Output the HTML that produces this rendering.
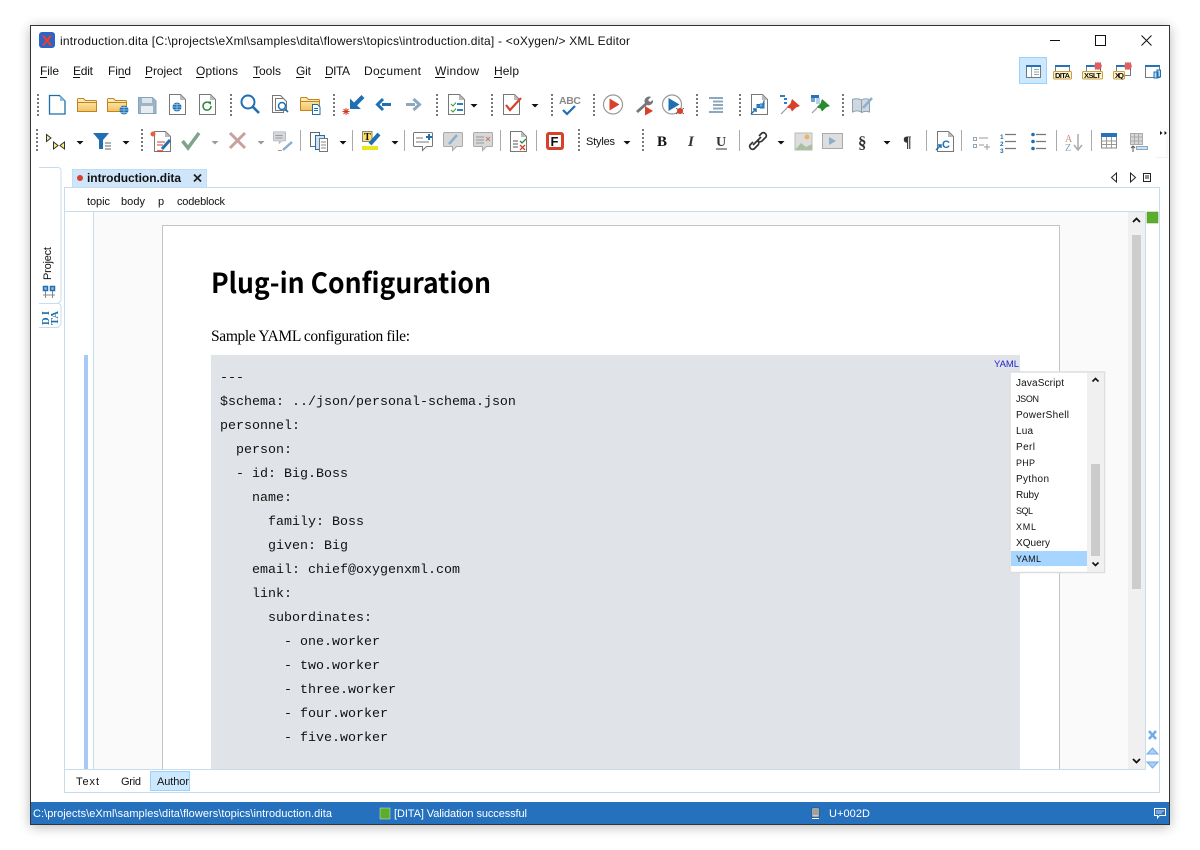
<!DOCTYPE html>
<html><head><meta charset="utf-8"><title>introduction.dita</title>
<style>
html,body{margin:0;padding:0;background:#fff;width:1200px;height:850px;overflow:hidden}
svg{position:absolute;left:0;top:0;display:block}
text{font-family:"Liberation Sans",sans-serif;font-size:12px;fill:#111}
.s{font-size:11px}
.m{font-family:"Liberation Mono",monospace;font-size:13.33px;fill:#111;white-space:pre}
.p{font-size:10px;fill:#111}
.u{font-size:9px;fill:#111}
.w{fill:#fff;font-size:11px}
</style></head><body>
<svg width="1200" height="850" viewBox="0 0 1200 850" xmlns="http://www.w3.org/2000/svg">
<defs>
<filter id="sh" x="-5%" y="-5%" width="110%" height="110%"><feGaussianBlur stdDeviation="6"/></filter>
<g id="grip"><rect x="0" y="0" width="2" height="2"/><rect x="0" y="4" width="2" height="2"/><rect x="0" y="8" width="2" height="2"/><rect x="0" y="12" width="2" height="2"/><rect x="0" y="16" width="2" height="2"/><rect x="0" y="20" width="2" height="2"/></g>
<path id="dd" d="M-3.500 0h7l-3.500 3.500z"/>
<linearGradient id="fold" x1="0" y1="0" x2="0" y2="1"><stop offset="0" stop-color="#fff0c0"/><stop offset="1" stop-color="#f3c260"/></linearGradient>
<g id="folder"><path d="M.500 2.500a1 1 0 0 1 1-1h5l2 2h10a1 1 0 0 1 1 1v10h-19z" fill="url(#fold)" stroke="#c08420"/><path d="M1 5.500h18" stroke="#c08420"/></g>
<g id="page"><path d="M.500.500h11l5 5v15h-16z" fill="#fff" stroke="#777"/><path d="M11 .500v5.500h5.500z" fill="#bbb"/></g>
<g id="globe"><circle cx="0" cy="0" r="4.500" fill="#1f6fb2"/><path d="M-4.500 0h9M0-4.500v9M-3.500-2.500h7M-3.500 2.500h7" stroke="#a8cce8" stroke-width=".7"/></g>
<g id="bubble"><path d="M.500 1.500a1 1 0 0 1 1-1h17a1 1 0 0 1 1 1v12a1 1 0 0 1-1 1h-5l-4 4v-4h-8a1 1 0 0 1-1-1z"/></g>
</defs>

<!-- window -->
<rect x="30" y="27" width="1140" height="800" fill="#000" opacity=".28" filter="url(#sh)"/>
<rect x="30.500" y="25.500" width="1139" height="799" fill="#fff" stroke="#333"/>

<!-- title bar -->
<rect x="39" y="32" width="16" height="16" rx="3" fill="#2a64c8"/>
<path d="M43 35.500l8 10M51 35.500l-8 10" stroke="#f03c20" stroke-width="2.200"/>
<text x="60" y="45" textLength="570">introduction.dita [C:\projects\eXml\samples\dita\flowers\topics\introduction.dita] - &lt;oXygen/&gt; XML Editor</text>
<path d="M1050 40.500h10M1095.500 35.500h10v10h-10zM1141.500 35.500l10 10M1151.500 35.500l-10 10" fill="none" stroke="#111"/>

<!-- menu -->
<g>
<text x="40" y="75" textLength="19">File</text><path d="M40 77.500h7" stroke="#111"/>
<text x="73" y="75" textLength="20">Edit</text><path d="M73 77.500h7" stroke="#111"/>
<text x="108" y="75" textLength="23">Find</text><path d="M119 77.500h6" stroke="#111"/>
<text x="145" y="75" textLength="37">Project</text><path d="M145 77.500h7" stroke="#111"/>
<text x="196" y="75" textLength="42">Options</text><path d="M196 77.500h8" stroke="#111"/>
<text x="253" y="75" textLength="28">Tools</text><path d="M253 77.500h7" stroke="#111"/>
<text x="296" y="75" textLength="15">Git</text><path d="M296 77.500h8" stroke="#111"/>
<text x="325" y="75" textLength="25">DITA</text><path d="M325 77.500h7" stroke="#111"/>
<text x="364" y="75" textLength="57">Document</text><path d="M378 77.500h6" stroke="#111"/>
<text x="435" y="75" textLength="44">Window</text><path d="M435 77.500h10" stroke="#111"/>
<text x="494" y="75" textLength="25">Help</text><path d="M494 77.500h8" stroke="#111"/>
</g>

<!-- perspective buttons -->
<rect x="1019.500" y="57.500" width="27" height="26" fill="#cce8ff" stroke="#99d1ff"/>
<g fill="#fff" stroke="#777">
<rect x="1026.500" y="65.500" width="14" height="12"/>
<path d="M1031.500 66v11M1034 69.500h5M1034 72h5M1034 74.500h5" stroke="#8ab"/>
<rect x="1026" y="65" width="15" height="2" fill="#2a72b8" stroke="none"/>
<rect x="1055.500" y="65.500" width="14" height="10"/><rect x="1055" y="65" width="15" height="2" fill="#2a72b8" stroke="none"/>
<rect x="1086.500" y="65.500" width="14" height="10"/><rect x="1086" y="65" width="15" height="2" fill="#2a72b8" stroke="none"/>
<rect x="1116.500" y="65.500" width="14" height="10"/><rect x="1116" y="65" width="15" height="2" fill="#2a72b8" stroke="none"/>
<rect x="1145.500" y="65.500" width="14" height="12"/><rect x="1145" y="65" width="15" height="2" fill="#2a72b8" stroke="none"/>
</g>
<g fill="#fff3c8" stroke="#c8a040"><rect x="1053.500" y="71.500" width="18" height="7.500" rx="1"/><rect x="1082.500" y="71.500" width="20" height="7.500" rx="1"/><rect x="1113.500" y="71.500" width="11" height="7.500" rx="1"/></g>
<text x="1055" y="78" style="font-size:7.500px;font-weight:bold" textLength="15">DITA</text><text x="1084" y="78" style="font-size:7.500px;font-weight:bold" textLength="17">XSLT</text><text x="1115" y="78" style="font-size:7.500px;font-weight:bold" textLength="9">XQ</text>
<path d="M1095 62.500l6 7M1101 62.500l-6 7M1125 62.500l6 7M1131 62.500l-6 7" stroke="#333" stroke-width=".6"/>
<circle cx="1098" cy="66" r="3.800" fill="#e06060"/><circle cx="1128" cy="66" r="3.800" fill="#e06060"/>
<path d="M1154 72h4v6h-4zM1157 70h3.500v7h-3.500z" fill="#bcdcf4" stroke="#1f6fb2"/>

<!-- grips -->
<g fill="#777">
<use href="#grip" x="37" y="94"/><use href="#grip" x="230" y="94"/><use href="#grip" x="333" y="94"/><use href="#grip" x="436" y="94"/><use href="#grip" x="491" y="94"/><use href="#grip" x="551" y="94"/><use href="#grip" x="593" y="94"/><use href="#grip" x="696" y="94"/><use href="#grip" x="739" y="94"/><use href="#grip" x="842" y="94"/>
<use href="#grip" x="36" y="129"/><use href="#grip" x="141" y="129"/><use href="#grip" x="578" y="129"/><use href="#grip" x="642" y="129"/>
</g>
<!-- separators row 2 -->
<path d="M300.500 130v21M352.500 130v21M404.500 130v21M500.500 130v21M536.500 130v21M739.500 130v21M926.500 130v21M961.500 130v21M1056.500 130v21M1091.500 130v21" stroke="#aaa"/>
<!-- dropdowns -->
<g fill="#111"><use href="#dd" x="474" y="104"/><use href="#dd" x="535" y="104"/><use href="#dd" x="80" y="141"/><use href="#dd" x="126" y="141"/><use href="#dd" x="343" y="141"/><use href="#dd" x="395" y="141"/><use href="#dd" x="627" y="141"/><use href="#dd" x="781" y="141"/><use href="#dd" x="887" y="141"/></g>
<g fill="#999"><use href="#dd" x="215" y="141"/><use href="#dd" x="261" y="141"/></g>

<!-- row 1 icons -->
<path d="M49.500 95.500h10l5.500 5.500v13h-15.500z" fill="#fff" stroke="#1c6ea8" stroke-width="1.300"/><path d="M60 96v5h5z" fill="#8cc0e8"/>
<use href="#folder" x="77" y="97"/>
<use href="#folder" x="107" y="97"/><use href="#globe" x="124" y="110"/>
<path d="M138.500 97.500h14l3.500 3.500v12.500h-17.500z" fill="#9cb4c8" stroke="#8aa2b6"/><rect x="142" y="98" width="10" height="5" fill="#dbe5ee"/><rect x="141" y="106" width="12" height="7" fill="#e6edf3"/>
<use href="#page" x="169" y="94"/><use href="#globe" x="177" y="107"/>
<use href="#page" x="199" y="94"/><path d="M211 106a4 4 0 1 1-1.500-3" fill="none" stroke="#2a8a3c" stroke-width="1.500"/><path d="M207 101.500h4v3.500z" fill="#2a8a3c"/>
<circle cx="248" cy="102" r="6.500" fill="none" stroke="#1f6fb2" stroke-width="2"/><path d="M253 107l6 6" stroke="#1f6fb2" stroke-width="2.600"/>
<path d="M272.500 95.500h8l3 3v14h-11z" fill="#fff" stroke="#777"/><path d="M275.500 98.500h8l3 3v9h-11z" fill="#fff" stroke="#777"/><circle cx="282" cy="106" r="3.500" fill="#fff" stroke="#1f6fb2" stroke-width="1.500"/><path d="M284.500 108.500l3.500 3.500" stroke="#1f6fb2" stroke-width="1.600"/>
<use href="#folder" x="300" y="96"/><path d="M312.500 104.500h5l2.500 2.500v7.500h-7.500z" fill="#fff" stroke="#1c6ea8"/><path d="M314 108.500h4M314 110.500h4" stroke="#1c6ea8"/>
<path d="M350 109V98.500l4 4 7.500-7.500 3 3-7.500 7.500 4 3.500z" fill="#1f6fb2"/>
<path d="M342.500 111.500h7M346 108v7M343.500 109l5 5M348.500 109l-5 5" stroke="#d83a20"/>
<path d="M391 104.500h-9M383 99l-5.500 5.500 5.500 5.500" fill="none" stroke="#1f6fb2" stroke-width="3"/>
<path d="M406 104.500h9M413.500 99l6 5.500-6 5.500" fill="none" stroke="#8ca8bf" stroke-width="3"/>
<use href="#page" x="448" y="94"/><path d="M451 104l2 2 3-3.500M451 110l2 2 3-3.500" fill="none" stroke="#3a9a3c"/><path d="M457 104h6M457 110h6" stroke="#2a80c8" stroke-width="2"/>
<use href="#page" x="503" y="94"/><path d="M506 105l4 5 11-12" fill="none" stroke="#d8402a" stroke-width="2.200"/>
<text x="559" y="104" style="font-size:10.500px;font-weight:bold;fill:#888" textLength="22">ABC</text><path d="M563 110l4 4 8-8" fill="none" stroke="#1f6fb2" stroke-width="2.200"/>
<circle cx="613" cy="104.500" r="9.500" fill="#fff" stroke="#999" stroke-width="1.200"/><path d="M609.500 98.500l10 6-10 6z" fill="#d8402a"/>
<path d="M651 97a4.500 4.500 0 0 0-6 6l-9 8 2 2 9-8a4.500 4.500 0 0 0 6-5l-3 2-2-2z" fill="#777"/><path d="M645 106l8 5-8 4.500z" fill="#d8402a"/>
<circle cx="672" cy="104.500" r="9.500" fill="#fff" stroke="#999" stroke-width="1.200"/><path d="M668.500 98l11 6.500-11 6.500z" fill="#1f6fb2"/><path d="M676 108l8 6M684 108l-8 6" stroke="#333" stroke-width=".7"/><circle cx="680" cy="111" r="3" fill="#d8402a"/>
<path d="M709 99h14M713 102.500h10M713 106h10M713 109.500h10M709 113h14" stroke="#8ca8bf" stroke-width="2" transform="translate(0 -1)"/>
<use href="#page" x="751" y="94"/><path d="M757 104.500h3v3h-3zM764 100v8h-4M764 104h-4" fill="#3a88c8" stroke="#1f6fb2"/><path d="M751 114l5-5M753 109h3v3" fill="none" stroke="#1f6fb2" stroke-width="1.500"/>
<path d="M780 95h5v2h-5zM784 98h3v2h-3zM784 102h3v2h-3z" fill="#2a80c8"/><path d="M792 99l8 7-4 1.500-4 4-1.500-3-4-1 4-4z" fill="#d8402a"/><path d="M787 108l-6 6" stroke="#999" stroke-width="1.200"/>
<rect x="811" y="95" width="8" height="3" fill="#2a72b8"/><rect x="811" y="98" width="4" height="4" fill="#6ba3d6"/><path d="M816 99h4M816 101h4M816 103h4" stroke="#6ba3d6"/><path d="M822 99l8 7-4 1.500-4 4-1.500-3-4-1 4-4z" fill="#2a8a2c"/><path d="M817 108l-5 5" stroke="#999" stroke-width="1.200"/>
<path d="M852.500 99.500c3-1 6-1 9 .5v12c-3-1.500-6-1.500-9 0zM861.500 100c2-1.500 5-1.500 8-.5v12.500c-3-1-6-.5-8 .5z" fill="#cfd8e0" stroke="#8ca0b0"/><path d="M863 108l9-10" stroke="#8cb0d0" stroke-width="2.500"/>

<!-- row 2 icons -->
<path d="M46.500 134.500v7l4.500-3.500zM53.500 142v7l4.500-3.500zM64.500 142v7l-4.500-3.500z" fill="#ffef80" stroke="#333"/>
<path d="M93 133h16l-6 7v9h-4v-9z" fill="#1f6fb2"/><path d="M105 143h6M105 146h6M105 149h6" stroke="#666"/>
<use href="#page" x="154" y="131"/><path d="M157 142h8M157 145h6" stroke="#d8402a"/><path d="M157 151h6" stroke="#d8402a" stroke-width="1.500"/><path d="M162 149l8-9" stroke="#1f6fb2" stroke-width="3"/><circle cx="153" cy="134" r="2.500" fill="#e8603a"/>
<path d="M182.500 141l5.500 7 11-15" fill="none" stroke="#7da58a" stroke-width="3.500"/>
<path d="M230 133l15 15M245 133l-15 15" stroke="#c8a09c" stroke-width="3"/>
<g transform="translate(273 131.500) scale(.65)" fill="#d4d8da" stroke="#aab"><use href="#bubble"/></g><path d="M275.500 135.500h7M275.500 138h7" stroke="#999"/><path d="M283 150l9-8" stroke="#8caecb" stroke-width="2.500"/><path d="M278 150.500h4" stroke="#999"/>
<path d="M310.500 132.500h9v14h-9z" fill="#fff" stroke="#666"/><path d="M315.500 135.500h9v14h-9z" fill="#cfe3f5" stroke="#1f6fb2"/><path d="M319.500 138.500h8l0 13h-8z" fill="#fff" stroke="#777"/><path d="M321 142h5M321 145h5M321 148h5" stroke="#888"/>
<rect x="362.500" y="131.500" width="9.500" height="10" fill="#ffe060" stroke="#888"/><text x="364" y="140" style="font-family:'Liberation Serif';font-size:10px;font-weight:bold" textLength="6">T</text><path d="M370 144l9-10" stroke="#1f6fb2" stroke-width="4"/><rect x="362" y="146" width="16" height="4" fill="#e8e820"/>
<g fill="#fff" stroke="#777"><use href="#bubble" transform="translate(413 132)"/></g><path d="M426 137h6M429 134v6" stroke="#1f6fb2" stroke-width="2"/><path d="M416 138h7M416 142h13" stroke="#777"/>
<g fill="#d8d8d8" stroke="#aaa"><use href="#bubble" transform="translate(443 132)"/><use href="#bubble" transform="translate(473 132)"/></g><path d="M449 144l8-9" stroke="#8caecb" stroke-width="2.500"/><path d="M476 137h8M476 140h8M476 143h8" stroke="#999"/><path d="M486 137l4 4M490 137l-4 4" stroke="#c87a6a"/>
<use href="#page" x="510" y="131"/><path d="M513 141h5M513 144h5M513 147h5" stroke="#555"/><path d="M520 141l2 2 4-4" fill="none" stroke="#2a8a3c" stroke-width="1.300"/><path d="M520 145l5 5M525 145l-5 5" stroke="#d8402a" stroke-width="1.300"/>
<rect x="546" y="132" width="18" height="18" rx="3" fill="#d8402a"/><path d="M549 135h12v12h-12z" fill="#fff"/><text x="550.500" y="146" style="font-weight:bold;font-size:13px;fill:#111">F</text>
<text x="586" y="145" class="s" textLength="29">Styles</text>
<text x="657" y="146" style="font-family:'Liberation Serif';font-weight:bold;font-size:15px" textLength="11">B</text>
<text x="688" y="146" style="font-family:'Liberation Serif';font-style:italic;font-weight:bold;font-size:15px;fill:#333" textLength="8">I</text>
<text x="716" y="146" style="font-family:'Liberation Serif';font-weight:bold;font-size:14px;fill:#333" textLength="11">U</text><path d="M716 149h11" stroke="#333"/>
<path d="M755 144l-3 3a3 3 0 0 0 4 4l4-4a3 3 0 0 0 0-4M761 138l3-3a3 3 0 0 1 4 4l-4 4a3 3 0 0 1-4 0M755 147l8-8" transform="translate(-2 -2)" fill="none" stroke="#333" stroke-width="1.700"/>
<rect x="795" y="133" width="17" height="17" fill="#ddd" stroke="#bbb"/><path d="M795 150l6-7 5 4 6-3v6z" fill="#a8c0a0"/><circle cx="807" cy="137" r="2.500" fill="#e8b860"/>
<rect x="822.500" y="133.500" width="20" height="15" fill="#dedede" stroke="#aaa"/><path d="M829 137l7 4-7 4z" fill="#8caecb"/>
<text x="858" y="148" style="font-family:'Liberation Serif';font-weight:bold;font-size:17px;fill:#333">§</text>
<text x="903" y="147" style="font-family:'Liberation Serif';font-weight:bold;font-size:16px;fill:#333">¶</text>
<use href="#page" x="937" y="131"/><text x="942" y="148" style="font-weight:bold;font-size:11px;fill:#1f6fb2">C</text><path d="M936 150l5-5M938 145h3v3" fill="none" stroke="#1f6fb2" stroke-width="1.500"/>
<path d="M973.500 137.500h3v3h-3zM973.500 144.500h3v3h-3z" fill="none" stroke="#8ca8bf"/><path d="M979 138h9M979 145h5M984 147h6M987 144v6" stroke="#999"/>
<text x="1000" y="139" style="font-size:6.500px;font-weight:bold;fill:#1f6fb2">1</text><text x="1000" y="146" style="font-size:6.500px;font-weight:bold;fill:#1f6fb2">2</text><text x="1000" y="153" style="font-size:6.500px;font-weight:bold;fill:#1f6fb2">3</text>
<path d="M1005 134.500h11M1005 141.500h11M1005 148.500h11M1036 134.500h10M1036 141.500h10M1036 148.500h10" stroke="#777" stroke-width="1.200"/>
<circle cx="1033" cy="134.500" r="1.800" fill="#1f6fb2"/><circle cx="1033" cy="141.500" r="1.800" fill="#1f6fb2"/><circle cx="1033" cy="148.500" r="1.800" fill="#1f6fb2"/>
<text x="1065" y="142" style="font-family:'Liberation Serif';font-size:10px;fill:#c88a80">A</text><text x="1065" y="151" style="font-family:'Liberation Serif';font-size:10px;fill:#7aa6c8">Z</text><path d="M1078 134v15M1074 145l4 5 4-5" fill="none" stroke="#aaa" stroke-width="1.500"/>
<rect x="1101.500" y="134.500" width="15" height="13.500" fill="#fff" stroke="#888"/><rect x="1101" y="133" width="16" height="4" fill="#2a72b8"/><path d="M1106.500 137v11M1111.500 137v11M1102 141h14M1102 144.500h14" stroke="#999"/>
<rect x="1130.500" y="133.500" width="12" height="11" fill="#d8d8d8" stroke="#aaa"/><path d="M1134.500 134v10M1138.500 134v10M1131 137h11M1131 141h11" stroke="#aaa"/><rect x="1136.500" y="146.500" width="11" height="3" fill="#cfe0f0" stroke="#8ca8bf"/><path d="M1133 152v-6M1131 148l2-2 2 2" fill="none" stroke="#555"/>
<path d="M1160 131v4l2.500-2zM1164.500 131v4l2.500-2z" fill="#111"/>
<path d="M1156 157.500h11v-30" fill="none" stroke="#f1f1f1"/>

<!-- left side pane -->
<path d="M39 167.500h19a3 3 0 0 1 3 3v130l-3 3H39" fill="#fff" stroke="#c8dcf0"/>
<path d="M39 303.500h19a3 3 0 0 1 3 3v18l-3 3H39" fill="#fff" stroke="#c8dcf0"/>
<text class="s" transform="translate(51 280) rotate(-90)" textLength="33">Project</text>
<path d="M43.500 286.500h4v4h-4zM50.500 286.500h4v4h-4z" fill="#90bce0" stroke="#1f6fb2" stroke-width="1.500"/><path d="M45.500 291v7M52.500 291v7M43 295h12" stroke="#888"/>
<text transform="translate(49 325) rotate(-90)" style="font-family:'Liberation Serif';font-weight:bold;font-size:10.500px;fill:#1c6ea8" textLength="14">DI</text>
<text transform="translate(58 325) rotate(-90)" style="font-family:'Liberation Serif';font-weight:bold;font-size:10.500px;fill:#1c6ea8" textLength="14">TA</text>

<!-- tab -->
<rect x="72.500" y="169.500" width="134" height="18" fill="#cfe6fa" stroke="#c2dcf2"/>
<circle cx="80" cy="178" r="3" fill="#d8402a"/>
<text x="87" y="182" style="font-weight:bold" textLength="94">introduction.dita</text>
<path d="M194 174.500l7 7M201 174.500l-7 7" stroke="#222" stroke-width="1.800"/>
<path d="M1116.500 173v9l-5-4.500zM1130.500 173v9l5-4.500z" fill="#fff" stroke="#222"/>
<path d="M1143.500 173.500h7v8h-7zM1145 176h4M1145 178h4" fill="#fff" stroke="#222"/>

<!-- editor frame -->
<rect x="64.500" y="187.500" width="1095" height="605" fill="#fff" stroke="#c8dcec"/>
<path d="M65 211.500h1080" stroke="#c8dcec"/>
<text class="s" x="87" y="205" textLength="23">topic</text><text class="s" x="121" y="205" textLength="24">body</text><text class="s" x="158" y="205" textLength="7">p</text><text class="s" x="177" y="205" textLength="48">codeblock</text>

<!-- content -->
<rect x="94" y="212" width="1034" height="557" fill="#fafafa"/>
<path d="M93.500 212v557" stroke="#c8dcec"/>
<rect x="84" y="355" width="4" height="414" fill="#a8c8f8"/>
<rect x="162.500" y="225.500" width="897" height="544" fill="#fff" stroke="#c4c4c4"/>
<rect x="65" y="769" width="1094" height="23" fill="#fff"/>
<path d="M65 769.500h1080M1145.500 212v558" stroke="#c8dcec"/>
<text x="211" y="293" style="font-family:'Noto Sans CJK SC','Liberation Sans',sans-serif;font-weight:bold;font-size:28px;fill:#000" textLength="280" lengthAdjust="spacingAndGlyphs">Plug-in Configuration</text>
<text x="211" y="341" style="font-family:'Liberation Serif',serif;font-size:15.500px;fill:#000" textLength="199">Sample YAML configuration file:</text>
<rect x="211" y="355" width="809" height="414" fill="#e0e4e8"/>
<g>
<text class="m" x="220" y="381">---</text>
<text class="m" x="220" y="405">$schema: ../json/personal-schema.json</text>
<text class="m" x="220" y="429">personnel:</text>
<text class="m" x="236" y="453">person:</text>
<text class="m" x="236" y="477">- id: Big.Boss</text>
<text class="m" x="252" y="501">name:</text>
<text class="m" x="268" y="525">family: Boss</text>
<text class="m" x="268" y="549">given: Big</text>
<text class="m" x="252" y="573">email: chief@oxygenxml.com</text>
<text class="m" x="252" y="597">link:</text>
<text class="m" x="268" y="621">subordinates:</text>
<text class="m" x="284" y="645">- one.worker</text>
<text class="m" x="284" y="669">- two.worker</text>
<text class="m" x="284" y="693">- three.worker</text>
<text class="m" x="284" y="717">- four.worker</text>
<text class="m" x="284" y="741">- five.worker</text>
</g>
<text x="994" y="367" style="font-size:9.500px;fill:#2020c8" textLength="25">YAML</text>

<!-- popup -->
<rect x="1010" y="372" width="94.500" height="200.500" fill="#fff" stroke="#ddd" stroke-width="1.500"/>
<rect x="1087" y="373" width="17" height="199" fill="#f0f0f0"/>
<rect x="1091" y="464" width="9" height="92" fill="#cbcbcb"/>
<rect x="1011" y="551" width="76" height="15" fill="#a6d5ff"/>
<path d="M1092.500 381.500l3-3 3 3M1092.500 562.500l3 3 3-3" fill="none" stroke="#111" stroke-width="1.600"/>
<text class="p" x="1016" y="386" textLength="48">JavaScript</text>
<text class="u" x="1016" y="402" textLength="23">JSON</text>
<text class="p" x="1016" y="418" textLength="53">PowerShell</text>
<text class="p" x="1016" y="434" textLength="17">Lua</text>
<text class="p" x="1016" y="450" textLength="19">Perl</text>
<text class="u" x="1016" y="466" textLength="19">PHP</text>
<text class="p" x="1016" y="482" textLength="33">Python</text>
<text class="p" x="1016" y="498" textLength="23">Ruby</text>
<text class="u" x="1016" y="514" textLength="17">SQL</text>
<text class="u" x="1016" y="530" textLength="20">XML</text>
<text class="p" x="1016" y="546" textLength="34">XQuery</text>
<text class="u" x="1016" y="562" textLength="25">YAML</text>

<!-- scrollbar -->
<rect x="1128" y="212" width="17" height="557" fill="#f0f0f0"/>
<rect x="1132" y="235" width="9" height="354" fill="#cdcdcd"/>
<path d="M1133 222l3.500-3.500 3.500 3.500M1133 759l3.500 3.500 3.500-3.500" fill="none" stroke="#111" stroke-width="1.800"/>
<rect x="1147" y="212" width="11" height="11" fill="#5cac2e" stroke="#4a9424" stroke-width=".5"/>
<path d="M1149 731l7 8M1156 731l-7 8" stroke="#70ace8" stroke-width="2.500"/>
<path d="M1147 754l5.500-6 5.500 6zM1147 762h11l-5.500 6z" fill="#a8d0f8" stroke="#70ace8"/>

<!-- bottom tabs -->
<text class="s" x="76" y="785" textLength="23">Text</text>
<text class="s" x="121" y="785" textLength="20">Grid</text>
<rect x="150.500" y="771.500" width="39" height="19" fill="#cce8ff" stroke="#99d1ff"/>
<text class="s" x="157" y="785" textLength="32">Author</text>

<!-- status bar -->
<rect x="31" y="802" width="1138" height="22" fill="#2671bd"/>
<text class="w" x="33" y="817" textLength="299">C:\projects\eXml\samples\dita\flowers\topics\introduction.dita</text>
<rect x="380" y="808" width="10" height="11" fill="#5cac2e" stroke="#d8e8d0" stroke-width=".5"/>
<text class="w" x="394" y="817" textLength="133">[DITA] Validation successful</text>
<rect x="812" y="808" width="7" height="9" fill="#ccc" stroke="#333" stroke-width=".5"/><path d="M813 810h5M813 812h5M813 814h5" stroke="#555" stroke-width=".7"/><path d="M812 818.500h7" stroke="#fff"/>
<text class="w" x="829" y="817" textLength="41">U+002D</text>
<path d="M1154.500 808.500h11v7h-6l-2 2.500v-2.500h-3z" fill="none" stroke="#fff"/><path d="M1156 811h8M1156 813h6" stroke="#fff" stroke-width=".7"/>
</svg>
</body></html>
